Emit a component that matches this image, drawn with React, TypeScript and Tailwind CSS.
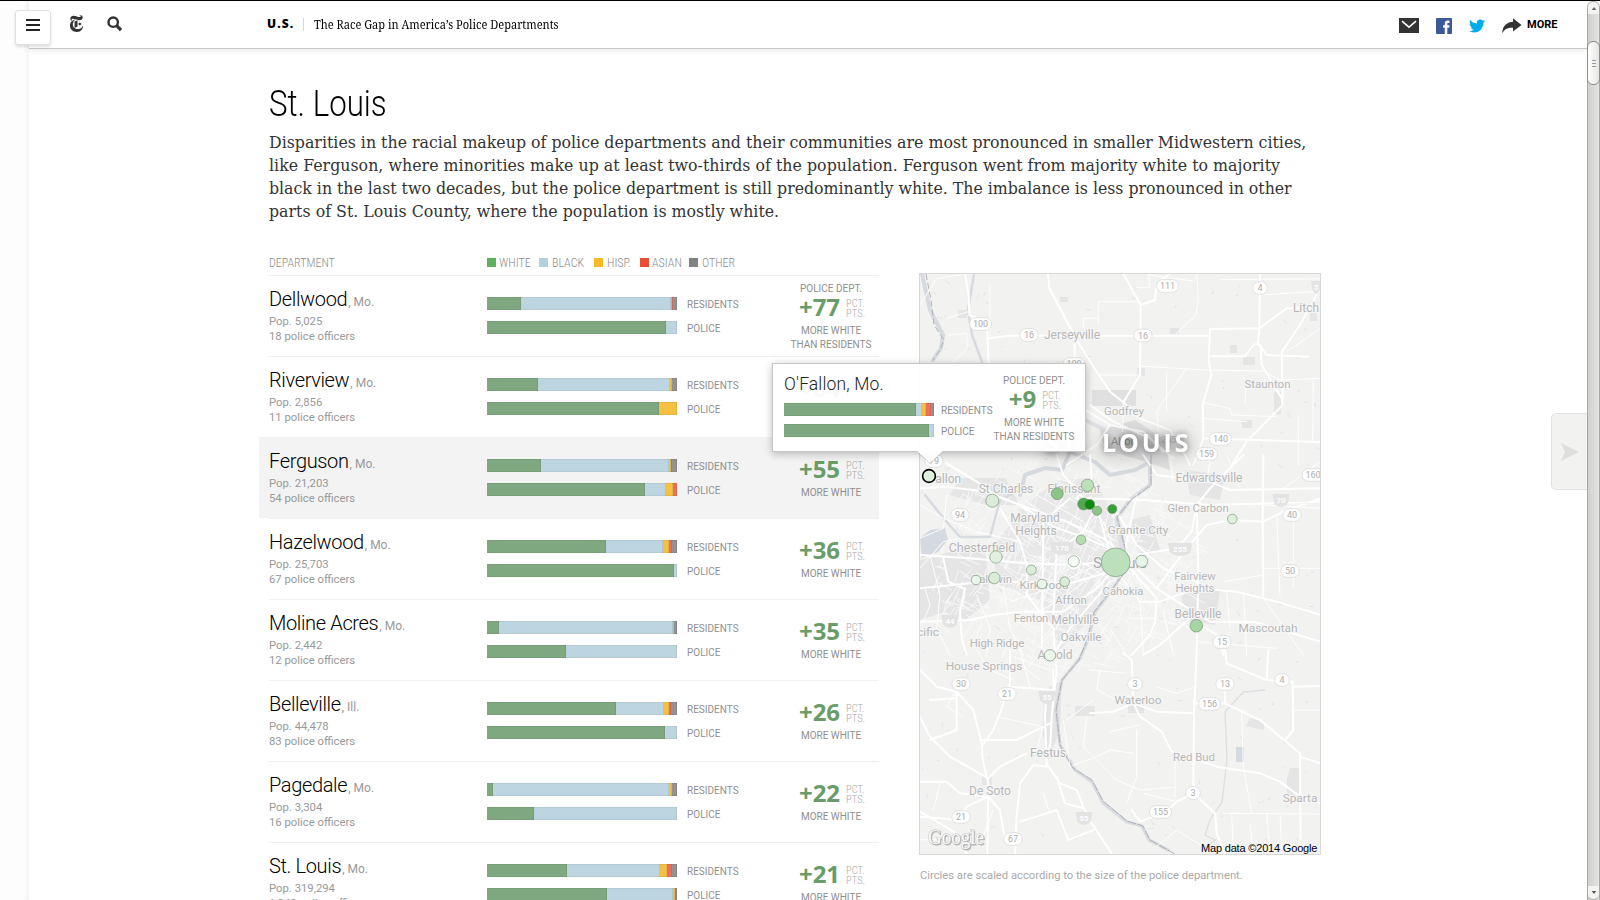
import React from "react";
import { SiNewyorktimes } from "react-icons/si";
import { FaTwitter } from "react-icons/fa";

type Segments = number[];

interface Department {
  name: string;
  state: string;
  population: string;
  officers: string;
  residents: Segments;
  police: Segments;
  gap: number;
}

const departments: Department[] = [
  { name: "Dellwood", state: "Mo.", population: "5,025", officers: "18", residents: [34, 150, 1, 1, 4], police: [179, 11, 0, 0, 0], gap: 77 },
  { name: "Riverview", state: "Mo.", population: "2,856", officers: "11", residents: [51, 132, 2, 0, 5], police: [172, 0, 18, 0, 0], gap: 64 },
  { name: "Ferguson", state: "Mo.", population: "21,203", officers: "54", residents: [54, 128, 2, 1, 5], police: [158, 21, 7, 4, 0], gap: 55 },
  { name: "Hazelwood", state: "Mo.", population: "25,703", officers: "67", residents: [119, 57, 6, 3, 5], police: [187, 3, 0, 0, 0], gap: 36 },
  { name: "Moline Acres", state: "Mo.", population: "2,442", officers: "12", residents: [12, 174, 1, 0, 3], police: [79, 111, 0, 0, 0], gap: 35 },
  { name: "Belleville", state: "Ill.", population: "44,478", officers: "83", residents: [129, 48, 5, 2, 6], police: [178, 12, 0, 0, 0], gap: 26 },
  { name: "Pagedale", state: "Mo.", population: "3,304", officers: "16", residents: [6, 176, 3, 0, 5], police: [47, 143, 0, 0, 0], gap: 22 },
  { name: "St. Louis", state: "Mo.", population: "319,294", officers: "1,348", residents: [80, 93, 7, 5, 5], police: [120, 66, 2, 1, 1], gap: 21 },
];

const legend = [
  { label: "WHITE", swatch: "bg-[#5fb15f]", width: "w-[52px]", gap: "gap-[3px]" },
  { label: "BLACK", swatch: "bg-[#b2d0dd]", width: "w-[55px]", gap: "gap-1" },
  { label: "HISP.", swatch: "bg-[#f7b928]", width: "w-[46px]", gap: "gap-1" },
  { label: "ASIAN", swatch: "bg-[#eb4c34]", width: "w-[49px]", gap: "gap-[3px]" },
  { label: "OTHER", swatch: "bg-[#828282]", width: "w-[52px]", gap: "gap-1" },
];

const segmentColors = ["bg-[#80a880]", "bg-[#bdd5e1]", "bg-[#f5c044]", "bg-[#ea6f5e]", "bg-[#929292]"];

function Bar({ values }: { values: Segments }) {
  return (
    <div className="flex h-[13px]">
      {values.map((v, i) =>
        v > 0 ? (
          <div key={i} className={`h-full shadow-[inset_-1px_0_0_rgba(0,0,0,0.07),inset_0_1px_0_rgba(0,0,0,0.05),inset_0_-1px_0_rgba(0,0,0,0.05)] ${segmentColors[i]}`} style={{ width: v }} />
        ) : null,
      )}
    </div>
  );
}

function Gap({ value, header, footer }: { value: number; header?: boolean; footer?: boolean }) {
  return (
    <div className="flex w-[92px] flex-col items-center text-[10px] leading-[14px] text-[#8f8f8f]">
      <div className="h-[14px] whitespace-nowrap">{header ? "POLICE DEPT." : ""}</div>
      <div className="flex h-[27px] items-start gap-[6px]">
        <span className="mt-[-5px] ml-[2px] font-['Noto_Sans'] text-[24px] leading-[32px] font-bold text-[#6a9c6a]">+{value}</span>
        <span className="mt-[3px] font-['Roboto_Condensed'] text-[10.5px] leading-[10px] font-light text-[#aaa]">
          PCT.
          <br />
          PTS.
        </span>
      </div>
      <div className="mt-px whitespace-nowrap">MORE WHITE</div>
      {footer && <div className="whitespace-nowrap">THAN RESIDENTS</div>}
    </div>
  );
}

function Row({ d, index }: { d: Department; index: number }) {
  const active = d.name === "Ferguson";
  return (
    <div className={active ? "-ml-[10px] h-[81px] bg-[#f3f3f3] pl-[10px]" : "h-[81px]"}>
      <div className={`flex h-[81px] border-t ${active ? "border-[#f3f3f3]" : "border-[#f0f0f0]"}`}>
        <div className="w-[218px] pt-[11px]">
          <div className="text-[12px] leading-[24px] text-[#999]">
            <span className="text-[20px] font-light tracking-[-0.35px] text-black">{d.name}</span>
            <span className="ml-px">, {d.state}</span>
          </div>
          <div className="text-[11.3px] leading-[15px] text-[#999]">
            <div>Pop. {d.population}</div>
            <div>{d.officers} police officers</div>
          </div>
        </div>
        <div className="flex w-[190px] flex-col gap-[11px] pt-[21px]">
          <Bar values={d.residents} />
          <Bar values={d.police} />
        </div>
        <div className="ml-[10px] w-[98px] pt-[21px] text-[10px] leading-[14px] text-[#909090]">
          <div className="pt-px">RESIDENTS</div>
          <div className="mt-[10px]">POLICE</div>
        </div>
        <div className="pt-[6px]">
          <Gap value={d.gap} header={index === 0} footer={index === 0} />
        </div>
      </div>
    </div>
  );
}

/* ---------- Map ---------- */

const northMajor = [
  "M414 26 L418 70 L500 225 L560 320 L600 380 L640 412 L690 330 L692 120 L640 26",
  "M165 26 L176 90 L178 150 L215 165 L232 200 L236 300",
  "M236 220 L300 212 L900 212",
  "M692 120 L735 105 L740 60 L778 26",
  "M1050 26 L1048 190 L900 192 L896 290 L904 330 L878 420 L880 520 L850 600",
  "M1048 190 L1130 130 L1232 128",
  "M1048 190 L1044 235 L1070 270 L1195 275",
  "M904 274 L1005 274 L1030 240 L1044 235",
  "M1052 240 L1055 300 L1115 400 L1118 420 L1010 530 L965 600",
  "M1220 90 L1170 180 L1115 262 L1118 410",
  "M880 520 L1232 531",
  "M640 412 L690 460 L780 495 L820 560 L840 600",
  "M520 430 L600 480 L700 500 L760 560",
  "M540 420 L610 470 L720 520 L790 580",
  "M600 480 L560 540 L470 600",
  "M494 225 L494 300",
];
const northMinor = [
  "M565 180 L565 110 L690 110", "M520 185 L520 160 L565 160", "M680 68 L720 68 L715 30 L850 48",
  "M860 26 L865 100 L858 150 L800 205", "M692 303 L880 315 L1060 318 L1110 345 L1232 340",
  "M830 310 L780 380 L740 440 L745 500", "M880 413 L960 430 L965 450 L1100 455", "M1005 420 L1008 350 L1000 335",
  "M930 44 L1232 42", "M240 212 L240 60", "M110 160 L175 140", "M115 210 L170 205 L172 250 L130 290", "M1130 260 L1232 190",
  "M1050 90 L1210 80", "M640 412 L638 500", "M1165 450 L1165 600", "M880 460 L1010 470", "M30 120 L80 40 L150 30",
  "M770 320 L770 440", "M1210 340 L1208 531", "M570 330 L692 330",
];
const midMajor = [
  "M110 26 L200 80 L260 125 L360 160 L470 200 L580 250 L640 300 L740 400 L850 470 L900 500",
  "M30 100 L110 95 L230 110 L330 150 L430 215 L530 250 L620 290",
  "M540 0 L545 70 L500 130 L560 150 L600 300", "M440 0 L460 60 L520 130 L700 135 L900 150 L1232 140",
  "M700 0 L740 60 L900 80 L960 105 L1232 100", "M1000 0 L900 100 L860 150 L845 230 L800 280 L680 300",
  "M1232 130 L1120 170 L1060 200 L960 195 L890 210 L830 280 L740 400",
  "M640 310 L560 400 L460 470 L330 470 L250 480 L180 495 L30 500",
  "M30 400 L180 385 L330 380 L480 385 L600 350", "M30 300 L180 310 L350 325 L500 330 L610 315",
  "M270 160 L330 260 L350 330 L350 420 L430 520 L435 600", "M165 400 L150 470 L155 550 L170 600",
  "M600 380 L480 520 L430 600", "M620 350 L690 440 L750 440 L860 400 L980 410 L1100 440 L1232 480",
  "M650 330 L740 430 L735 500 L720 540 L665 600", "M860 150 L865 340 L860 600", "M1060 0 L1058 200 L1060 430",
  "M850 480 L750 570 L700 600", "M900 500 L1030 500 L1232 560", "M870 510 L930 545 L940 600",
  "M100 310 L115 380 L160 400", "M560 150 L520 230 L440 290 L430 480", "M480 130 L400 200 L395 600",
  "M680 120 L650 260 L640 320", "M620 170 L680 270 L760 340 L860 380",
];
const midMinor = [
  "M30 70 L120 60", "M30 340 L100 260 L150 250", "M45 400 L60 450 L40 500", "M60 300 L90 420 L80 520 L120 600",
  "M200 420 L240 520 L230 600", "M280 400 L300 520 L340 600", "M1150 200 L1150 400", "M1100 180 L1110 420", "M1060 340 L1232 340",
  "M950 410 L960 520", "M1000 410 L1010 600", "M1060 430 L1180 600", "M860 560 L1100 580", "M900 20 L890 80", "M780 0 L790 80",
  "M950 0 L990 100", "M1120 100 L1232 20", "M1060 150 L1232 160", "M940 380 L1060 360", "M660 490 L740 490", "M690 440 L700 600",
  "M600 520 L650 600", "M760 470 L790 600", "M560 500 L600 560", "M110 120 L100 220 L30 250",
  "M330 150 L480 300 L610 380", "M380 120 L520 200 L600 290", "M470 200 L640 300 L700 390", "M300 440 L420 400 L560 330",
  "M340 500 L470 420 L590 330", "M400 560 L520 430 L600 340", "M520 140 L580 200 L620 300", "M30 150 L100 190 L200 230 L330 260",
];
const southMajor = [
  "M30 60 L80 110 L140 125 L140 240 L60 270 M140 125 L190 180 L215 280 L218 330 L235 400 L232 610",
  "M300 0 L300 100 L270 190 L250 240 L215 290", "M410 120 L405 200 L410 350 L370 345 L330 400 L320 500 L315 610",
  "M410 340 L450 400 L500 420 L520 470 L545 520 L605 610", "M218 270 L320 270 L420 220", "M30 200 L60 260 L120 320 L235 385 L270 350 L350 310",
  "M30 395 L110 395 L150 430 L235 440 L270 480 L285 570", "M235 440 L170 470 L150 510 L30 500", "M330 515 L380 500 L440 480 L475 570 L550 540",
  "M640 10 L665 30 L670 160 L690 200 L755 245 L785 305 L920 350 L1050 370 L1110 395 L1170 440",
  "M670 160 L740 185 L850 190", "M670 160 L610 185 L540 190", "M860 0 L852 190 L850 400 L850 430 L800 455 L770 485 L690 515 L665 480",
  "M945 0 L950 40 L1070 90 L1075 0", "M1070 90 L1148 95 L1150 240 L1125 270", "M945 100 L945 160 L1050 210 L1110 260 L1170 310 L1172 610",
  "M850 160 L945 160", "M1170 320 L1232 340", "M850 430 L915 490 L920 550 L945 610", "M1148 110 L1232 108", "M430 60 L430 120 L300 110",
  "M60 150 L140 145", "M30 485 L140 550 L170 610", "M1170 440 L1232 460", "M430 0 L440 60 L425 200 L420 300", "M440 380 L465 460 L520 475",
];
const southMinor = [
  "M460 210 L480 350 L560 320 L600 300 L670 310", "M530 200 L520 290 L620 390 L690 420 L790 412", "M600 245 L690 225",
  "M680 240 L680 380 L650 460", "M570 60 L560 120 L620 150", "M995 180 L1000 350 L1025 490", "M940 490 L1232 492", "M965 490 L970 610",
  "M1020 520 L1030 610", "M1070 490 L1080 610", "M1110 490 L1115 610", "M340 50 L390 90", "M310 20 L420 60 M330 0 L360 110",
  "M260 200 L400 230 L380 300", "M160 90 L110 170 L160 200", "M250 480 L220 560 L30 570", "M400 430 L420 490", "M740 590 L800 540 L880 590",
  "M700 430 L800 455", "M1150 180 L1232 180", "M200 0 L240 60 L310 90", "M90 400 L70 480", "M540 60 L650 70",
  "M795 310 L795 440", "M860 110 L800 130 L740 110", "M470 210 L550 150",
];

const placeLabels: [string, number, number, number][] = [
  ["Jerseyville", 1072, 338.5, 12], ["Litch", 1306, 312, 12], ["Staunton", 1267.5, 388, 11.5], ["Godfrey", 1124, 415, 11.5],
  ["Edwardsville", 1209, 482, 12], ["Fallon", 945, 483, 12], ["St Charles", 1006, 493, 12], ["Florissant", 1074, 493, 12],
  ["Glen Carbon", 1198, 512, 11.2], ["Maryland", 1035, 522, 12], ["Heights", 1036, 535, 12], ["Granite City", 1138, 534, 11.8],
  ["Chesterfield", 982, 552, 12.5], ["Fairview", 1195, 580, 11.3], ["Heights", 1195, 592, 11.3], ["Baldwin", 992, 583, 11.3],
  ["Kirkwood", 1044, 589, 11.8], ["Cahokia", 1123, 595, 11.3], ["Affton", 1071, 604, 11.3], ["Belleville", 1198, 618, 12],
  ["Fenton", 1031, 622, 11.3], ["Mehlville", 1075, 624, 12], ["Mascoutah", 1268, 632, 11.8], ["High Ridge", 997, 647, 11.3],
  ["Oakville", 1081, 641, 11.8], ["Arnold", 1055, 659, 12], ["cific", 928, 636, 11.8], ["House Springs", 984, 670, 11.8],
  ["Waterloo", 1138, 704, 11.8], ["Festus", 1048, 757, 12], ["Red Bud", 1194, 761, 11.3], ["De Soto", 990, 795, 12], ["Sparta", 1300, 802, 11.8],
];

const shields: [string, number, number][] = [
  ["111", 1167.5, 286], ["4", 1260, 288], ["100", 980.5, 324], ["16", 1029, 335], ["16", 1143, 335.5], ["109", 1074, 364], ["3", 1078, 393],
  ["140", 1220.5, 439], ["159", 1206.5, 454], ["79", 934, 461], ["160", 1313, 475], ["94", 960, 515], ["40", 1292, 515], ["50", 1290, 571],
  ["15", 1222, 642], ["30", 961, 684], ["21", 1007, 694], ["3", 1135, 684], ["13", 1225, 684], ["4", 1282, 680],
  ["156", 1209.5, 704], ["3", 1193, 793], ["155", 1160.5, 812], ["21", 961, 817], ["67", 1013, 839],
];

const interstates: [string, number, number][] = [
  ["70", 1281, 500], ["255", 1180, 549], ["170", 1062, 548], ["44", 950, 621], ["55", 1047, 697], ["55", 1084, 818], ["5", 1316, 287],
];

const circles: [number, number, number, string][] = [
  [992.3, 500.7, 6.5, "#d9ecd7"], [1057.3, 493.7, 6, "#8cc48a"], [1087.5, 485.3, 6.2, "#bce0b9"], [1083.7, 504, 6, "#52a850"],
  [1089.7, 504.5, 5, "#0c8a0c"], [1097, 510.7, 4.7, "#8cc48a"], [1112.3, 509, 4.6, "#37a037"], [1081, 539.7, 4.8, "#b6ddb2"],
  [1115.7, 562.3, 14.4, "#bce0bb"], [1141.7, 561.3, 6, "#e9f4e8"], [1073.7, 561.3, 5.6, "#f8fcf8"], [996, 557, 6.2, "#e2f0e0"],
  [1031.3, 570, 5, "#d9ecd7"], [994.3, 578, 5.8, "#d9ecd7"], [976, 580, 4.8, "#ecf5eb"], [1042, 584, 4.8, "#ecf5eb"],
  [1064.7, 581.7, 4.8, "#d9ecd7"], [1196.3, 625.7, 6.3, "#a5d5a2"], [1232.3, 519, 4.8, "#e0efde"], [1050, 655.3, 5.7, "#ebf5ea"],
];

/** Small deterministic generator for the street texture and terrain flecks. */
function sequence(seed: number) {
  let s = seed;
  return () => {
    s = (s * 16807) % 2147483647;
    return s / 2147483647;
  };
}

function buildStreets() {
  const rnd = sequence(77);
  let d = "";
  for (let i = 0; i < 620; i++) {
    const a = rnd() * Math.PI * 2;
    const r = Math.pow(rnd(), 0.7);
    const x = 1065 + Math.cos(a) * r * 135;
    const y = 560 + Math.sin(a) * r * 105;
    const dir = (rnd() > 0.5 ? 0.45 : 2.02) + (rnd() - 0.5) * 0.5;
    const len = 6 + rnd() * 18;
    d += `M${x.toFixed(1)} ${y.toFixed(1)}l${(Math.cos(dir) * len).toFixed(1)} ${(Math.sin(dir) * len).toFixed(1)}`;
  }
  return d;
}

function buildFlecks() {
  const rnd = sequence(421);
  let d = "";
  for (let i = 0; i < 190; i++) {
    const x = 922 + rnd() * 394;
    const y = 276 + rnd() * 574;
    d += `M${x.toFixed(1)} ${y.toFixed(1)}l${(rnd() * 5 - 2).toFixed(1)} ${(rnd() * 5 - 1).toFixed(1)}l${(rnd() * 4 - 1).toFixed(1)} ${(rnd() * 3 - 2).toFixed(1)}`;
  }
  return d;
}

const streets = buildStreets();
const flecks = buildFlecks();

function Roads({ y, major, minor }: { y: number; major: string[]; minor: string[] }) {
  return (
    <g transform={`translate(910 ${y}) scale(0.33333)`} fill="none" stroke="#fff" strokeLinejoin="round" strokeLinecap="round">
      <path d={minor.join(" ")} strokeWidth="2.8" />
      <path d={major.join(" ")} strokeWidth="6" />
    </g>
  );
}

function MapPanel() {
  return (
    <div className="h-[582px] w-[402px] overflow-hidden border border-[#d8d8d8] bg-[#f2f2f1]">
      <svg viewBox="920 274 400 580" className="block h-[580px] w-[400px]">
        <g fill="#e5e5e5">
          <path d="M920 560 L950 552 L985 545 L990 600 L965 620 L945 612 L920 620Z" />
          <path d="M1030 500 L1060 480 L1095 478 L1110 510 L1125 560 L1110 590 L1085 625 L1060 650 L1040 600 L1000 585 L990 550 L1010 525Z" fill="#e8e8e8" />
          <path d="M1092 390 h44 v16 h-44z M1100 430 L1135 420 L1165 440 L1170 470 L1140 460 L1105 450Z" fill="#e0e0e0" />
          <path d="M1130 520 L1150 515 L1160 550 L1140 560Z M1180 585 L1220 590 L1215 625 L1185 620Z M1185 470 L1225 475 L1220 500 L1190 495Z" />
          <path d="M960 478 L1005 478 L1020 505 L985 505 L950 495Z M1290 768 h9 v28 h-12 v-18z M1250 718 l14 4 v8 l-18-4z" />
          <path d="M958 310 h9 v8 h-9z M1060 297 h8 v5 h-8z M1170 328 h9 v6 h-9z M1230 345 h7 v8 h-7z M1243 357 h12 v8 h-12z M1274 392 h7 v22 h-7z M1310 313 h7 v8 h-7z M1137 368 h8 v8 h-8z M1242 420 h10 v8 h-10z M1075 706 h20 v10 h-20z M1128 705 h16 v8 h-16z M982 776 h10 v9 h-10z" />
          <path d="M1045 690 L1062 680 L1060 730 L1052 750 L1042 735Z" />
        </g>
        <path d={streets} fill="none" stroke="#f9f9f9" strokeWidth="0.9" />
        <path d="M1118 575 L1124 560 L1116 520 L1130 500 L1150 485 L1150 460 L1125 440 L1085 420 L1060 405" fill="none" stroke="#dfe1e4" strokeWidth="4" />
        <g fill="none" stroke="#d7dadf" strokeLinecap="round" strokeLinejoin="round">
          <path d="M922 274 L930 310 L943 335 L941 348 L933 360" strokeWidth="4" />
          <path d="M974 274 L968 310 L972 335 L982 362" strokeWidth="2.5" />
          <path d="M1020 495 L1025 475 L1045 468 L1062 470 L1070 452 L1095 462 L1110 475 L1135 470 L1150 462" strokeWidth="4" />
          <path d="M925 495 L945 520 L960 537 L990 537 L1000 500 L1020 490" strokeWidth="2.5" />
          <path d="M1150 462 L1150 485 L1130 500 L1117 517 L1124 545 L1125 570 L1112 590 L1095 612 L1088 640 L1080 658 L1062 680 L1056 710 L1060 745 L1075 770 L1092 782 L1103 803 L1127 822 L1142 826 L1149 840 L1168 850" strokeWidth="3.2" />
        </g>
        <path d="M920 538 L930 530 L945 528 L948 540 L938 552 L922 558Z M1236 747 h8 v15 h-8z" fill="#d5d9e0" />
        <path d="M1265 690 L1243 692 L1225 712 L1227 760 L1222 802 L1210 820 L1205 835 L1215 840 L1202 850" fill="none" stroke="#dcdee2" strokeWidth="1.3" />
        <path d={flecks} fill="none" stroke="#dcdde0" strokeWidth="0.7" />
        <Roads y={265} major={northMajor} minor={northMinor} />
        <Roads y={455} major={midMajor} minor={midMinor} />
        <Roads y={650} major={southMajor} minor={southMinor} />
        <path d="M1151 455 L1151 485 L1131 500 L1117 517 L1125 548 L1125 572 L1110 592 L1094 612 L1087 640 L1079 660 L1062 680 L1056 710 L1060 745 L1073 768 L1092 780 L1103 801 L1127 821 L1143 826 L1150 840 L1175 854" fill="none" stroke="#a9abae" strokeWidth="0.9" strokeDasharray="9 1.5" />
        <path d="M926 274 L931 300 L934 325 L944 340 L940 350 L933 360" fill="none" stroke="#a9abb0" strokeWidth="0.9" strokeDasharray="6 3" />

        {interstates.map(([n, x, y], i) => (
          <g key={i}>
            <path d={`M${x - n.length * 3.5 - 1.5} ${y - 6} h${n.length * 7 + 3} l-1.5 9 q-2 3 -${n.length * 3.5} 4 q-${n.length * 3 - 1} -1 -${n.length * 3.5} -4z`} fill="#e3e3e3" />
            <text x={x} y={y + 2.8} textAnchor="middle" className="fill-[#fdfdfd] font-['Roboto'] text-[8px] font-bold">{n}</text>
          </g>
        ))}
        <circle cx="1073.7" cy="562" r="8" fill="#fff" stroke="#e2e2e2" strokeWidth="0.8" />
        {shields.map(([n, x, y], i) => (
          <g key={i}>
            <rect x={x - 5.5 - n.length * 1.8} y={y - 6.3} width={11 + n.length * 3.6} height="12.6" rx="6" fill="#fff" stroke="#dedede" strokeWidth="0.9" />
            <text x={x} y={y + 3.2} textAnchor="middle" className="fill-[#adadad] font-['Roboto'] text-[9px]">{n}</text>
          </g>
        ))}
        {placeLabels.map(([n, x, y, size], i) => (
          <text key={i} x={x} y={y} fontSize={size} textAnchor="middle" paintOrder="stroke" stroke="#f6f6f6" strokeWidth="2" className="fill-[#b7b7b7] font-['Roboto']">{n}</text>
        ))}
        <text x="1120" y="568" fontSize="15" textAnchor="middle" paintOrder="stroke" stroke="#f4f4f4" strokeWidth="2" className="fill-[#ababab] font-['Roboto']">St Louis</text>

        <text x="1111" y="445" fontSize="11" className="fill-[#9c9c9c] font-['Roboto']">Alton</text>
        <text x="1161" y="443" fontSize="9" className="fill-[#c4c4c4] font-['Roboto']">255</text>
        <g className="font-['Open_Sans'] text-[25px] font-bold tracking-[2.9px] drop-shadow-[0_2px_9px_rgba(0,0,0,0.5)]">
          <g className="drop-shadow-[0_0_3px_rgba(0,0,0,0.4)]">
            <text x="1045" y="451.5" fill="#fff">ST.</text>
            <text x="1102" y="451.5" fill="#fff">LOUIS</text>
          </g>
        </g>

        {circles.map(([x, y, r, fill], i) => (
          <circle key={i} cx={x} cy={y} r={r} fill={fill} stroke="#6f8a6f" strokeOpacity="0.75" strokeWidth="0.8" />
        ))}
        <circle cx="929" cy="476" r="6.4" fill="#e0f0de" stroke="#000" strokeWidth="1.6" />

        <text x="928" y="843.5" fontSize="20" textLength="56" lengthAdjust="spacingAndGlyphs" paintOrder="stroke" stroke="#bdbdbd" strokeWidth="0.9" className="fill-[#fafafa] font-['Liberation_Serif'] drop-shadow-[1px_1px_0.5px_rgba(0,0,0,0.25)]">Google</text>
        <text x="1201" y="852" className="fill-black font-['Liberation_Sans'] text-[11px] tracking-[-0.18px]">Map data ©2014 Google</text>
      </svg>
    </div>
  );
}

function Tooltip() {
  return (
    <div className="absolute top-[363px] left-[772px] h-[89px] w-[314px] border border-[#c6c6c6] bg-white/95 shadow-[0_2px_8px_rgba(0,0,0,0.25)]">
      <div className="flex">
        <div className="w-[206px] pt-[9px] pl-[11px]">
          <div className="text-[17.5px] leading-[22px] font-light tracking-[0.15px] text-[#222]">O'Fallon, Mo.</div>
          <div className="mt-[8px] flex gap-[7px]">
            <div className="flex w-[150px] flex-col gap-[8px]">
              <Bar values={[132, 6, 4, 5, 3]} />
              <Bar values={[145, 5, 0, 0, 0]} />
            </div>
            <div className="text-[10px] leading-[14px] text-[#8f8f8f]">
              <div className="pt-px">RESIDENTS</div>
              <div className="mt-[7px]">POLICE</div>
            </div>
          </div>
        </div>
        <div className="pt-[10px] pl-[9px]">
          <Gap value={9} header footer />
        </div>
      </div>
      <svg className="absolute top-[87px] left-[143px] h-[14px] w-[28px]" viewBox="0 0 28 14">
        <path d="M1 0 L14 12 L27 0Z" fill="#fdfdfd" />
        <path d="M1.5 1 L14 12.3 L26.5 1" fill="none" stroke="#b5b5b5" strokeWidth="0.9" strokeDasharray="1.5 1" />
      </svg>
    </div>
  );
}

function Header() {
  return (
    <header className="relative flex h-[49px] w-full border-t border-black">
      <div className="w-[29px] shrink-0" />
      <div className="relative flex flex-1 items-start border-b border-[#c8c8c8] bg-white shadow-[0_2px_6px_rgba(0,0,0,0.08)]">
        <button className="-ml-[14px] mt-[9px] flex h-[35px] w-[36px] flex-col items-center gap-[3px] rounded-[3px] border border-[#e0e0e0] bg-white pt-[8px] shadow-[0_2px_3px_rgba(0,0,0,0.12)]" aria-label="Sections">
          <span className="h-[2px] w-[14px] bg-[#222]" />
          <span className="h-[2px] w-[14px] bg-[#222]" />
          <span className="h-[2px] w-[14px] bg-[#222]" />
        </button>
        <SiNewyorktimes className="mt-[14px] ml-[17px] size-[17px] text-[#333]" />
        <svg viewBox="0 0 16 16" className="mt-[15px] ml-[22px] size-[16px]">
          <circle cx="6.2" cy="6.2" r="4.7" fill="none" stroke="#333" strokeWidth="2.4" />
          <path d="M9.6 9.6 L14 14.2" stroke="#333" strokeWidth="3.2" />
        </svg>
        <div className="mt-[14px] ml-[144px] flex h-[18px] items-center">
          <span className="w-[36px] font-['Open_Sans'] text-[12px] leading-[18px] font-extrabold tracking-[1.1px] text-black">U.S.</span>
          <span className="h-[13px] w-px bg-[#d4d8dc]" />
          <span className="-mt-px ml-[10px] origin-left scale-x-[0.849] font-['Noto_Serif'] text-[13px] leading-[18px] whitespace-nowrap text-black">The Race Gap in America’s Police Departments</span>
        </div>
        <div className="mt-[17px] mr-[29px] ml-auto flex h-[16px] items-start">
          <svg viewBox="0 0 20 15" className="h-[15px] w-[20px]">
            <path d="M0 0h20v15H0z" fill="#333" />
            <path d="M3 3.2 L10 9.2 L17 3.2" fill="none" stroke="#fff" strokeWidth="1.6" />
          </svg>
          <svg viewBox="0 0 16 16" className="ml-[17px] size-[16px]">
            <rect width="16" height="16" rx="1" fill="#3b5998" />
            <path d="M8.8 16V9.7H7.1V7.3h1.7V5.6c0-2 1-3 3-3h1.7V5h-1.2c-.9 0-1 .4-1 1v1.3h2.2l-.3 2.4h-1.9V16z" fill="#fff" />
          </svg>
          <FaTwitter className="ml-[17px] size-[16px] text-[#00aced]" />
          <svg viewBox="0 0 20 16" className="ml-[17px] h-[16px] w-[20px]">
            <path d="M0.3 15.5 C0.3 8 4.5 4 11 3.7 V0.3 L19.5 7 L11 13.5 V9.8 C6 9.5 2.5 11 0.3 15.5Z" fill="#333" />
          </svg>
          <span className="ml-[5px] w-[31px] text-[11px] leading-[14px] font-bold text-black">MORE</span>
        </div>
      </div>
      <div className="w-[13px] shrink-0" />
    </header>
  );
}

function Scrollbar() {
  return (
    <div className="absolute top-px right-0 flex h-[899px] w-[13px] flex-col rounded-t-[7px] border-x border-[#a9a9a7] bg-gradient-to-r from-[#d0d0ce] to-[#e4e4e2]">
      <div className="flex h-[13px] items-center justify-center rounded-t-[6px] border-t border-[#a9a9a7] bg-[#f4f4f3]">
        <svg viewBox="0 0 6 4" className="h-[3px] w-[6px]"><path d="M0 4 L3 0 L6 4Z" fill="#666" /></svg>
      </div>
      <div className="-mx-px mt-[27px] flex h-[44px] flex-col items-center justify-center gap-[2px] rounded-[6px] border border-[#8d8d8b] bg-gradient-to-r from-white to-[#e6e6e4]">
        <span className="h-px w-[4px] bg-[#999]" />
        <span className="h-px w-[4px] bg-[#999]" />
        <span className="h-px w-[4px] bg-[#999]" />
      </div>
      <div className="flex-1" />
      <div className="flex h-[14px] items-center justify-center rounded-b-[6px] border-b border-[#a9a9a7] bg-[#f4f4f3]">
        <svg viewBox="0 0 6 4" className="h-[3px] w-[6px]"><path d="M0 0 L3 4 L6 0Z" fill="#555" /></svg>
      </div>
    </div>
  );
}

export default function App() {
  return (
    <div className="relative h-[900px] w-[1600px] overflow-hidden bg-white font-['Roboto',sans-serif]">
      <div className="absolute top-px left-0 h-[899px] w-[29px] bg-gradient-to-r from-[#fdfdfd] from-80% to-[#f4f4f4]" />
      <Header />
      <main className="ml-[269px] w-[1053px]">
        <h1 className="w-[200px] origin-left scale-x-[0.868] pt-[34px] text-[36px] leading-[42px] font-light text-black">St. Louis</h1>
        <p className="mt-[6px] font-['DejaVu_Serif_Condensed','DejaVu_Serif',serif] text-[17.56px] leading-[23px] whitespace-nowrap text-[#333]">
          <span className="tracking-[0.01px]">Disparities in the racial makeup of police departments and their communities are most pronounced in smaller Midwestern cities,</span>
          <br />
          <span className="tracking-[0.033px]">like Ferguson, where minorities make up at least two-thirds of the population. Ferguson went from majority white to majority</span>
          <br />
          <span className="tracking-[-0.02px]">black in the last two decades, but the police department is still predominantly white. The imbalance is less pronounced in other</span>
          <br />
          <span className="tracking-[0.02px]">parts of St. Louis County, where the population is mostly white.</span>
        </p>
        <div className="mt-[32px] flex">
          <section className="w-[610px]">
            <div className="flex h-[20px] font-['Roboto_Condensed'] text-[12px] leading-[17px] font-light text-[#8c8c8c]">
              <div className="w-[218px]">DEPARTMENT</div>
              {legend.map((item) => (
                <div key={item.label} className={`flex items-start ${item.width} ${item.gap}`}>
                  <span className={`mt-[3px] size-[9px] shrink-0 ${item.swatch}`} />
                  <span>{item.label}</span>
                </div>
              ))}
            </div>
            {departments.map((d, i) => (
              <Row key={d.name} d={d} index={i} />
            ))}
          </section>
          <aside className="mt-[18px] ml-[40px]">
            <MapPanel />
            <p className="mt-[13px] ml-px text-[11.23px] leading-[16px] whitespace-nowrap text-[#aaa]">Circles are scaled according to the size of the police department.</p>
          </aside>
        </div>
      </main>
      <Tooltip />
      <button className="absolute top-[413px] left-[1551px] flex h-[77px] w-[37px] items-center rounded-l-[5px] border border-r-0 border-[#e2e2e2] bg-[#f2f2f1] pl-[9px]" aria-label="Next">
        <svg viewBox="0 0 18 18" className="size-[18px]"><path d="M0 0 L18 9 L0 18 L4 9Z" fill="#dedede" /></svg>
      </button>
      <Scrollbar />
    </div>
  );
}
